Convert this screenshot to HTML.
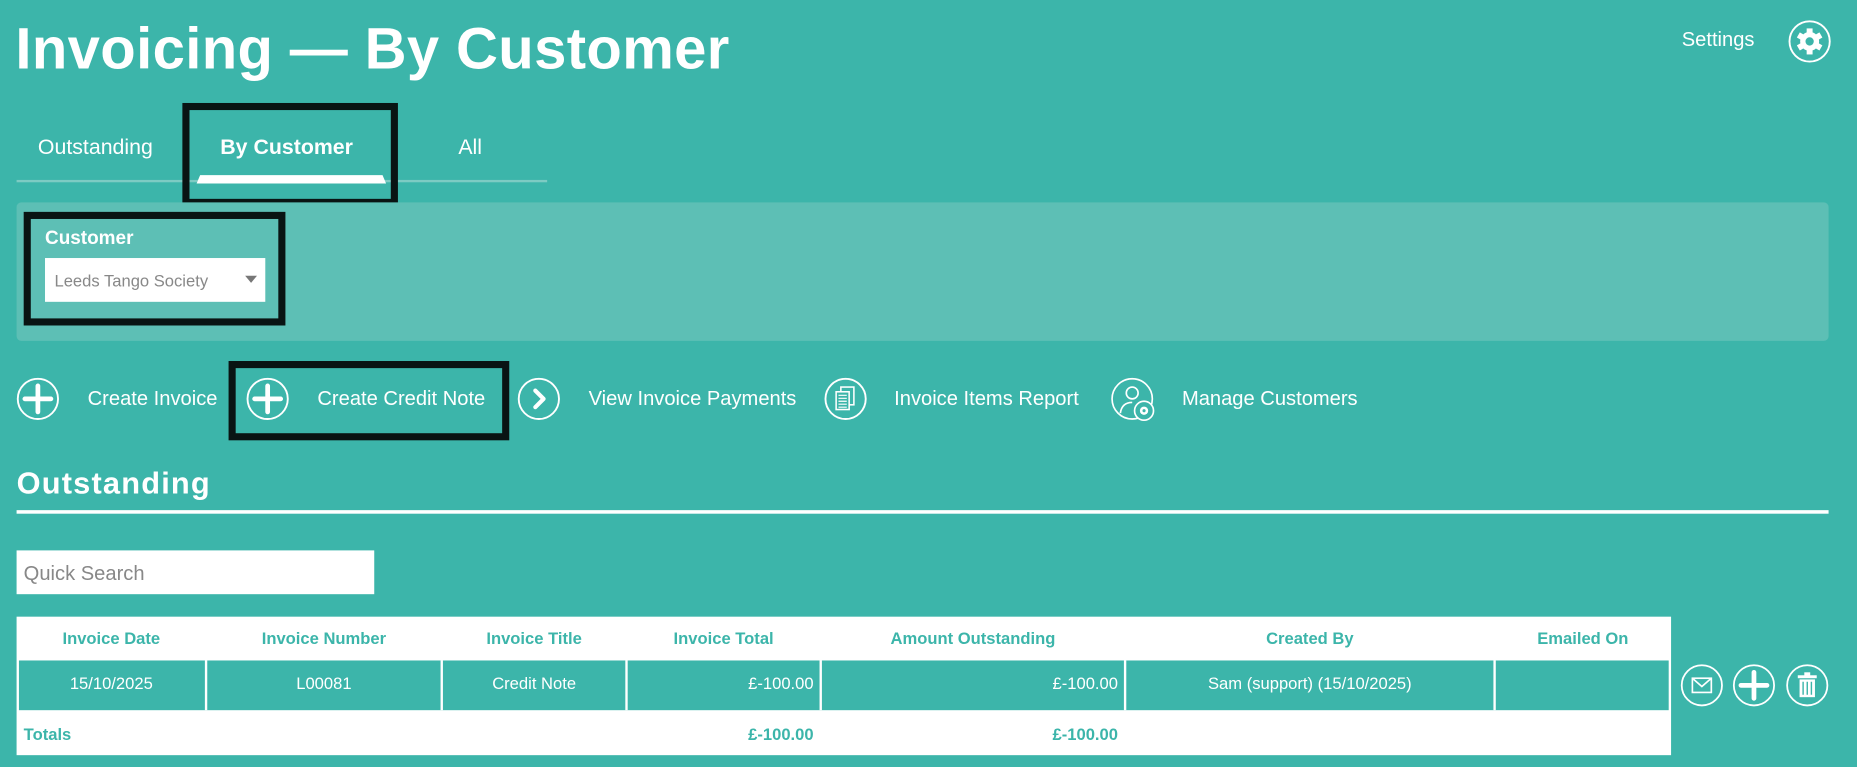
<!DOCTYPE html>
<html><head><meta charset="utf-8"><style>
html,body{margin:0;padding:0;width:1857px;height:767px;overflow:hidden;background:#3cb5aa;}
#w{position:absolute;left:0;top:0;width:1568px;height:648px;transform:scale(1.18431,1.18364);transform-origin:0 0;font-family:"Liberation Sans",sans-serif;color:#fff;}
.a{position:absolute;white-space:nowrap;}
.box{position:absolute;border:6px solid #091413;box-sizing:border-box;}
svg{position:absolute;overflow:visible}
.th{position:absolute;top:521px;height:37px;line-height:37px;text-align:center;font-weight:bold;font-size:14px;color:#3cb5aa;}
.td{position:absolute;top:558px;height:42px;line-height:38px;font-size:14px;color:#fff;box-sizing:border-box;}
</style></head><body><div id="w">
<div class="a" style="left:13px;top:14px;font-size:49px;font-weight:bold;letter-spacing:0.3px;">Invoicing — By Customer</div>
<div class="a" style="left:1420px;top:24px;font-size:17px;">Settings</div>
<svg style="left:1510px;top:17px" width="36" height="36" viewBox="0 0 36 36"><circle cx="18" cy="18" r="17" fill="none" stroke="#fff" stroke-width="1.6"/><g fill="#fff" transform="translate(18,18)"><circle r="8"/><rect x="-2.5" y="-11" width="5" height="22"/><rect x="-2.5" y="-11" width="5" height="22" transform="rotate(60)"/><rect x="-2.5" y="-11" width="5" height="22" transform="rotate(120)"/></g><circle cx="18" cy="18" r="3.5" fill="#3cb5aa"/></svg>

<div class="a" style="left:32px;top:114px;font-size:18px;">Outstanding</div>
<div class="a" style="left:186px;top:114px;font-size:18px;font-weight:bold;">By Customer</div>
<div class="a" style="left:387px;top:114px;font-size:18px;">All</div>
<div class="a" style="left:14px;top:152px;width:448px;height:2px;background:#7dcbc3;"></div>
<svg style="left:166px;top:148px" width="160" height="7"><polygon points="3,0 157,0 160,7 0,7" fill="#fff"/></svg>
<div class="box" style="left:154px;top:87px;width:182px;height:87px;"></div>

<div class="a" style="left:14px;top:171px;width:1530px;height:117px;background:#5dbfb5;border-radius:4px;"></div>
<div class="box" style="left:20px;top:179px;width:221px;height:96px;"></div>
<div class="a" style="left:38px;top:193px;font-size:16px;font-weight:bold;">Customer</div>
<div class="a" style="left:38px;top:218px;width:186px;height:37px;background:#fff;"></div>
<div class="a" style="left:46px;top:229px;font-size:14px;color:#888;">Leeds Tango Society</div>
<svg style="left:207px;top:233px" width="10" height="6"><polygon points="0,0 10,0 5,6" fill="#777"/></svg>

<svg style="left:14px;top:319px" width="36" height="36" viewBox="0 0 36 36"><circle cx="18" cy="18" r="17" fill="none" stroke="#fff" stroke-width="1.6"/><path d="M18 7v22M7 18h22" stroke="#fff" stroke-width="4" stroke-linecap="round"/></svg>
<div class="a" style="left:74px;top:327px;font-size:17px;">Create Invoice</div>
<svg style="left:208px;top:319px" width="36" height="36" viewBox="0 0 36 36"><circle cx="18" cy="18" r="17" fill="none" stroke="#fff" stroke-width="1.6"/><path d="M18 7v22M7 18h22" stroke="#fff" stroke-width="4" stroke-linecap="round"/></svg>
<div class="a" style="left:268px;top:327px;font-size:17px;">Create Credit Note</div>
<div class="box" style="left:193px;top:305px;width:237px;height:67px;"></div>
<svg style="left:437px;top:319px" width="36" height="36" viewBox="0 0 36 36"><circle cx="18" cy="18" r="17" fill="none" stroke="#fff" stroke-width="1.6"/><path d="M15 11l7 7-7 7" fill="none" stroke="#fff" stroke-width="3.5" stroke-linecap="round" stroke-linejoin="round"/></svg>
<div class="a" style="left:497px;top:327px;font-size:17px;">View Invoice Payments</div>
<svg style="left:696px;top:319px" width="36" height="36" viewBox="0 0 36 36"><circle cx="18" cy="18" r="17" fill="none" stroke="#fff" stroke-width="1.6"/><rect x="14" y="8" width="11" height="15" fill="none" stroke="#fff" stroke-width="1.3"/><rect x="10" y="12" width="11" height="15" fill="#3cb5aa" stroke="#fff" stroke-width="1.3"/><path d="M12 15h7M12 17.5h7M12 20h7M12 22.5h7M12 25h7" stroke="#fff" stroke-width="1"/></svg>
<div class="a" style="left:755px;top:327px;font-size:17px;">Invoice Items Report</div>
<svg style="left:938px;top:319px" width="38" height="38" viewBox="0 0 38 38"><circle cx="18" cy="18" r="17" fill="none" stroke="#fff" stroke-width="1.4"/><circle cx="18" cy="13" r="5" fill="none" stroke="#fff" stroke-width="1.4"/><path d="M8 30c1-7 5-9 10-9" fill="none" stroke="#fff" stroke-width="1.4"/><circle cx="28" cy="28" r="8" fill="#3cb5aa" stroke="#fff" stroke-width="1.4"/><circle cx="28" cy="28" r="3.5" fill="#fff"/><circle cx="28" cy="28" r="1.3" fill="#3cb5aa"/></svg>
<div class="a" style="left:998px;top:327px;font-size:17px;">Manage Customers</div>

<div class="a" style="left:14px;top:393px;font-size:26px;font-weight:bold;letter-spacing:1px;">Outstanding</div>
<div class="a" style="left:14px;top:431px;width:1530px;height:3px;background:#fff;"></div>

<div class="a" style="left:14px;top:465px;width:302px;height:37px;background:#fff;"></div>
<div class="a" style="left:20px;top:475px;font-size:17px;color:#888;">Quick Search</div>

<div class="a" style="left:14px;top:521px;width:1397px;height:117px;background:#fff;"></div>
<div class="a" style="left:16px;top:558px;width:1393px;height:42px;background:#3cb5aa;"></div>
<div class="th" style="left:14px;width:160px;">Invoice Date</div>
<div class="th" style="left:174px;width:199px;">Invoice Number</div>
<div class="th" style="left:373px;width:156px;">Invoice Title</div>
<div class="th" style="left:529px;width:164px;">Invoice Total</div>
<div class="th" style="left:693px;width:257px;">Amount Outstanding</div>
<div class="th" style="left:950px;width:312px;">Created By</div>
<div class="th" style="left:1262px;width:149px;">Emailed On</div>
<div class="a" style="left:173px;top:558px;width:2px;height:42px;background:#fff"></div>
<div class="a" style="left:372px;top:558px;width:2px;height:42px;background:#fff"></div>
<div class="a" style="left:528px;top:558px;width:2px;height:42px;background:#fff"></div>
<div class="a" style="left:692px;top:558px;width:2px;height:42px;background:#fff"></div>
<div class="a" style="left:949px;top:558px;width:2px;height:42px;background:#fff"></div>
<div class="a" style="left:1261px;top:558px;width:2px;height:42px;background:#fff"></div>
<div class="td" style="left:14px;width:160px;text-align:center;">15/10/2025</div>
<div class="td" style="left:174px;width:199px;text-align:center;">L00081</div>
<div class="td" style="left:373px;width:156px;text-align:center;">Credit Note</div>
<div class="td" style="left:529px;width:164px;text-align:right;padding-right:6px;">£-100.00</div>
<div class="td" style="left:693px;width:257px;text-align:right;padding-right:6px;">£-100.00</div>
<div class="td" style="left:950px;width:312px;text-align:center;">Sam (support) (15/10/2025)</div>
<div class="a" style="left:20px;top:612px;font-size:14px;font-weight:bold;color:#3cb5aa;">Totals</div>
<div class="a" style="left:529px;top:612px;width:158px;text-align:right;font-size:14px;font-weight:bold;color:#3cb5aa;">£-100.00</div>
<div class="a" style="left:693px;top:612px;width:251px;text-align:right;font-size:14px;font-weight:bold;color:#3cb5aa;">£-100.00</div>

<svg style="left:1419px;top:561px" width="36" height="36" viewBox="0 0 36 36"><circle cx="18" cy="18" r="17" fill="none" stroke="#fff" stroke-width="1.5"/><rect x="10" y="12" width="16" height="12" fill="none" stroke="#fff" stroke-width="1.4"/><path d="M10 12l8 7 8-7" fill="none" stroke="#fff" stroke-width="1.4"/></svg>
<svg style="left:1463px;top:561px" width="36" height="36" viewBox="0 0 36 36"><circle cx="18" cy="18" r="17" fill="none" stroke="#fff" stroke-width="1.5"/><path d="M18 7v22M7 18h22" stroke="#fff" stroke-width="4" stroke-linecap="round"/></svg>
<svg style="left:1508px;top:561px" width="36" height="36" viewBox="0 0 36 36"><circle cx="18" cy="18" r="17" fill="none" stroke="#fff" stroke-width="1.5"/><rect x="15.5" y="7" width="5" height="3" fill="#fff"/><rect x="10" y="9.5" width="16" height="2.5" fill="#fff"/><rect x="11.5" y="13" width="13" height="15" fill="#fff"/><path d="M14.5 15v11M18 15v11M21.5 15v11" stroke="#3cb5aa" stroke-width="1.2"/></svg>
</div></body></html>
